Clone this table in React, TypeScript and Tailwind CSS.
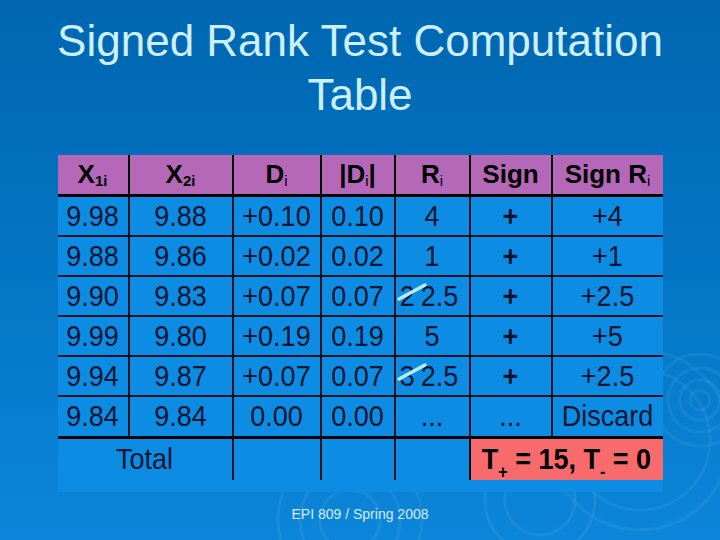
import React from "react";

type Row = {
  x1: string;
  x2: string;
  d: string;
  abs: string;
  rank: string;
  struck?: string;
  sign: string;
  signRank: string;
};

const rows: Row[] = [
  { x1: "9.98", x2: "9.88", d: "+0.10", abs: "0.10", rank: "4", sign: "+", signRank: "+4" },
  { x1: "9.88", x2: "9.86", d: "+0.02", abs: "0.02", rank: "1", sign: "+", signRank: "+1" },
  { x1: "9.90", x2: "9.83", d: "+0.07", abs: "0.07", rank: "2.5", struck: "2", sign: "+", signRank: "+2.5" },
  { x1: "9.99", x2: "9.80", d: "+0.19", abs: "0.19", rank: "5", sign: "+", signRank: "+5" },
  { x1: "9.94", x2: "9.87", d: "+0.07", abs: "0.07", rank: "2.5", struck: "3", sign: "+", signRank: "+2.5" },
  { x1: "9.84", x2: "9.84", d: "0.00", abs: "0.00", rank: "...", sign: "...", signRank: "Discard" },
];

function Txt({ children }: { children: React.ReactNode }) {
  return <span className="inline-block scale-y-[1.12] whitespace-nowrap">{children}</span>;
}

function HeadCell({ children, last }: { children: React.ReactNode; last?: boolean }) {
  return (
    <div
      className={`flex h-[42px] items-center justify-center border-b-[3px] border-black bg-[#b568b8] text-[26px] font-bold text-black ${
        last ? "" : "border-r-2"
      }`}
    >
      {children}
    </div>
  );
}

function Cell({
  children,
  last,
  bottom,
}: {
  children?: React.ReactNode;
  last?: boolean;
  bottom?: boolean;
}) {
  return (
    <div
      className={`flex items-center justify-center overflow-visible border-[#08111f] text-[27px] text-[#0a1631] ${
        bottom ? "h-[42px] border-b-[3px] border-b-black" : "h-[40px] border-b-2"
      } ${last ? "" : "border-r-2"}`}
    >
      {children}
    </div>
  );
}

function Sub({ children, bold }: { children: React.ReactNode; bold?: boolean }) {
  return (
    <span className={`relative top-[7px] text-[15px] ${bold ? "font-bold" : "font-normal"}`}>
      {children}
    </span>
  );
}

function Ripples() {
  return (
    <svg className="pointer-events-none absolute inset-0" width="720" height="540" viewBox="0 0 720 540">
      <g fill="none" stroke="#ffffff" strokeOpacity="0.06" strokeWidth="3">
        <circle cx="700" cy="400" r="10" />
        <circle cx="700" cy="400" r="20" />
        <circle cx="700" cy="400" r="32" />
        <circle cx="700" cy="400" r="46" />
        <circle cx="640" cy="440" r="70" />
        <circle cx="640" cy="440" r="90" />
        <circle cx="350" cy="520" r="30" />
        <circle cx="350" cy="520" r="50" />
        <circle cx="350" cy="520" r="72" />
        <circle cx="540" cy="500" r="35" />
        <circle cx="540" cy="500" r="55" />
      </g>
    </svg>
  );
}

export default function App() {
  return (
    <div
      className="relative flex h-[540px] w-[720px] flex-col items-center overflow-hidden bg-gradient-to-b from-[#0066b0] via-[#0475c4] to-[#0c86da]"
      style={{ fontFamily: '"Liberation Sans", Arial, sans-serif' }}
    >
      <Ripples />

      <h1 className="relative pt-[14px] text-center text-[44px] font-normal leading-[54px] text-[#cdf0ff]">
        Signed Rank Test Computation
        <br />
        Table
      </h1>

      <div className="relative mt-[33px] w-[605px] bg-[#0c8ce2] pb-3">
        <div className="grid grid-cols-[72px_104px_88px_74px_75px_82px_110px]">
          <HeadCell>
            X<Sub bold>1i</Sub>
          </HeadCell>
          <HeadCell>
            X<Sub bold>2i</Sub>
          </HeadCell>
          <HeadCell>
            D<Sub>i</Sub>
          </HeadCell>
          <HeadCell>
            |D<Sub>i</Sub>|
          </HeadCell>
          <HeadCell>
            R<Sub>i</Sub>
          </HeadCell>
          <HeadCell>Sign</HeadCell>
          <HeadCell last>
            Sign R<Sub>i</Sub>
          </HeadCell>

          {rows.map((r, i) => {
            const bottom = i === rows.length - 1;
            const dots = r.rank === "...";
            return (
              <React.Fragment key={i}>
                <Cell bottom={bottom}>
                  <Txt>{r.x1}</Txt>
                </Cell>
                <Cell bottom={bottom}>
                  <Txt>{r.x2}</Txt>
                </Cell>
                <Cell bottom={bottom}>
                  <Txt>{r.d}</Txt>
                </Cell>
                <Cell bottom={bottom}>
                  <Txt>{r.abs}</Txt>
                </Cell>
                <Cell bottom={bottom}>
                  {r.struck ? (
                    <span className="relative -ml-[6px] flex items-center">
                      <Txt>{r.struck}</Txt>
                      <span className="ml-[6px]">
                        <Txt>{r.rank}</Txt>
                      </span>
                      <svg className="absolute -left-[3px] top-[4px]" width="34" height="22" viewBox="0 0 34 22">
                        <line x1="2" y1="19" x2="28" y2="5" stroke="#b7ecf7" strokeWidth="3.5" strokeLinecap="round" />
                      </svg>
                    </span>
                  ) : dots ? (
                    <Txt>...</Txt>
                  ) : (
                    <Txt>{r.rank}</Txt>
                  )}
                </Cell>
                <Cell bottom={bottom}>
                  {dots ? (
                    <Txt>...</Txt>
                  ) : (
                    <span className="font-bold">
                      <Txt>{r.sign}</Txt>
                    </span>
                  )}
                </Cell>
                <Cell bottom={bottom} last>
                  <Txt>{r.signRank}</Txt>
                </Cell>
              </React.Fragment>
            );
          })}

          <div className="col-span-2 flex h-[41px] items-center justify-center border-r-2 border-[#08111f] text-[27px] text-[#0a1631]">
            <Txt>Total</Txt>
          </div>
          <div className="h-[41px] border-r-2 border-[#08111f]" />
          <div className="h-[41px] border-r-2 border-[#08111f]" />
          <div className="h-[41px] border-r-2 border-[#08111f]" />
          <div className="col-span-2 flex h-[41px] items-center justify-center bg-[#f76b6c] text-[27px] font-bold text-black">
            <Txt>
              T<span className="relative top-[8px] text-[16px]">+</span> = 15, T
              <span className="relative top-[8px] text-[16px]">-</span> = 0
            </Txt>
          </div>
        </div>
      </div>

      <div className="relative mt-auto mb-[15px] text-[14px] text-[#d6ecff]">EPI 809 / Spring 2008</div>
    </div>
  );
}
